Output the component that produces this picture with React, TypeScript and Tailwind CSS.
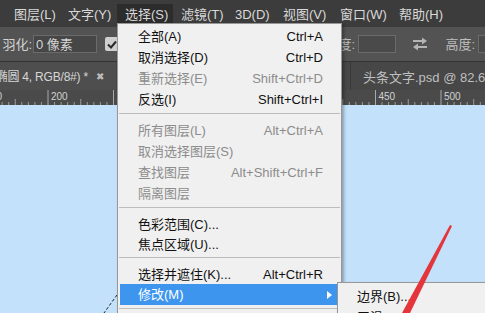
import React from 'react';

type Item = { label: string; key?: string; off?: boolean; h?: string; active?: boolean; sub?: boolean };

const font = "font-['Liberation_Sans','Noto_Sans_CJK_SC',sans-serif]";

const bar: { label: string; w: string }[] = [
  { label: '图层(L)', w: 'w-[54px]' },
  { label: '文字(Y)', w: 'w-[57px]' },
  { label: '选择(S)', w: 'w-[56px]' },
  { label: '滤镜(T)', w: 'w-[54px]' },
  { label: '3D(D)', w: 'w-[48px]' },
  { label: '视图(V)', w: 'w-[57px]' },
  { label: '窗口(W)', w: 'w-[59px]' },
  { label: '帮助(H)', w: 'w-[60px]' },
];

const groups: Item[][] = [
  [
    { label: '全部(A)', key: 'Ctrl+A' },
    { label: '取消选择(D)', key: 'Ctrl+D' },
    { label: '重新选择(E)', key: 'Shift+Ctrl+D', off: true },
    { label: '反选(I)', key: 'Shift+Ctrl+I' },
  ],
  [
    { label: '所有图层(L)', key: 'Alt+Ctrl+A', off: true },
    { label: '取消选择图层(S)', off: true },
    { label: '查找图层', key: 'Alt+Shift+Ctrl+F', off: true },
    { label: '隔离图层', off: true },
  ],
  [
    { label: '色彩范围(C)...', h: 'h-[20px]' },
    { label: '焦点区域(U)...', h: 'h-[20px]' },
  ],
  [
    { label: '选择并遮住(K)...', key: 'Alt+Ctrl+R', h: 'h-[20px]' },
    { label: '修改(M)', active: true, sub: true },
  ],
  [
    { label: '扩大选取(G)' },
    { label: '选取相似(R)' },
  ],
];

const Row = ({ it }: { it: Item }) => (
  <div
    className={`relative mx-[2px] flex items-center justify-between whitespace-nowrap pl-[18px] pr-[16px] text-[13px] leading-none ${it.h ?? 'h-[21px]'} ${
      it.active ? 'bg-[#3d95ee] text-white' : it.off ? 'text-[#8c8c8c]' : 'text-[#111]'
    }`}
  >
    <span>{it.label}</span>
    {it.key && <span>{it.key}</span>}
    {it.sub && (
      <svg className="absolute right-[7px] top-[7px]" width="5" height="8" viewBox="0 0 5 8">
        <polygon points="0,0 5,4 0,8" fill="#fff" />
      </svg>
    )}
  </div>
);

const Ruler = () => {
  const step = 65.5;
  const ticks: React.ReactNode[] = [];
  for (let k = -1; k <= 7; k++) {
    const x0 = 48 + k * step;
    ticks.push(<line key={`M${k}`} x1={x0} y1={0} x2={x0} y2={15} stroke="#a9a9a9" strokeWidth={1} />);
    ticks.push(
      <text key={`T${k}`} x={x0 + 3} y={10} fontSize={10} fill="#d2d2d2" fontFamily="Liberation Sans, sans-serif">
        {200 + k * 50}
      </text>
    );
    for (let m = 1; m < 10; m++) {
      const x = x0 + (m * step) / 10;
      const h = m === 5 ? 6 : 3;
      ticks.push(<line key={`m${k}-${m}`} x1={x} y1={15 - h} x2={x} y2={15} stroke="#9a9a9a" strokeWidth={1} />);
    }
  }
  return (
    <svg width="485" height="15" className="block">
      {ticks}
    </svg>
  );
};

export default function App() {
  return (
    <div className={`relative flex h-[313px] w-[485px] flex-col overflow-hidden bg-[#c3e1fb] ${font}`}>
      {/* menu bar */}
      <div className="flex h-[27px] shrink-0 items-start bg-[#3c3c3c] pl-[6px] pt-[4px] text-[13px] text-[#d9d9d9]">
        {bar.map((b) => (
          <div
            key={b.label}
            className={`flex h-[20px] shrink-0 items-center whitespace-nowrap pl-[8px] leading-none ${b.w} ${
              b.label === '选择(S)' ? 'bg-[#2c2c2c]' : ''
            }`}
          >
            {b.label}
          </div>
        ))}
      </div>

      {/* options bar */}
      <div className="flex h-[34px] shrink-0 items-center overflow-hidden whitespace-nowrap bg-[#535353] text-[13px] leading-none text-[#d4d4d4]">
        <div className="flex w-[33px] shrink-0 justify-end overflow-hidden pr-[1px]">羽化:</div>
        <div className="flex h-[18px] w-[64px] shrink-0 items-center border border-[#6a6a6a] bg-[#464646] pl-[2px]">
          0 像素
        </div>
        <div className="ml-[8px] flex h-[14px] w-[14px] shrink-0 items-center justify-center rounded-[2px] bg-[#cfcfcf]">
          <svg width="10" height="9" viewBox="0 0 10 9">
            <path d="M1 4.5 L4 7.5 L9 1.5" stroke="#2a2a2a" strokeWidth="2" fill="none" />
          </svg>
        </div>
        <div className="flex w-[237px] shrink-0 justify-end pr-[1px] text-[#bdbdbd]">宽度:</div>
        <div className="ml-[2px] h-[18px] w-[38px] shrink-0 border border-[#6a6a6a] bg-[#4a4a4a]" />
        <svg className="ml-[16px] shrink-0" width="16" height="14" viewBox="0 0 16 14">
          <path d="M1 4 H11" stroke="#b4b4b4" strokeWidth="2" />
          <polygon points="10,0.5 15,4 10,7.5" fill="#b4b4b4" />
          <path d="M5 10 H15" stroke="#b4b4b4" strokeWidth="2" />
          <polygon points="6,6.5 1,10 6,13.5" fill="#b4b4b4" />
        </svg>
        <div className="flex w-[48px] shrink-0 justify-end pr-[1px] text-[#bdbdbd]">高度:</div>
        <div className="ml-[2px] h-[18px] w-[38px] shrink-0 border border-[#6a6a6a] bg-[#4a4a4a]" />
      </div>

      {/* tab bar */}
      <div className="flex h-[29px] shrink-0 overflow-hidden whitespace-nowrap border-t border-[#333] bg-[#474747] text-[13px] leading-none">
        <div className="flex w-[116px] shrink-0 items-center justify-end overflow-hidden bg-[#4e4e4e] pr-[12px] pt-[2px] text-[#d6d6d6]">
          <span className="shrink-0 text-[12px] tracking-[-0.2px]">椭圆 4, RGB/8#) *</span>
          <span className="ml-[8px] shrink-0 text-[10px] text-[#bcbcbc]">✖</span>
        </div>
        <div className="ml-[234px] flex shrink-0 items-center border-l border-[#393939] pl-[12px] pt-[2px] text-[#bfbfbf]">
          头条文字.psd @ 82.6% (椭圆 4, RGB/8#)
        </div>
      </div>

      {/* ruler */}
      <div className="h-[15px] shrink-0 bg-[#4a4a4a]">
        <Ruler />
      </div>

      {/* canvas */}
      <div className="flex-1 bg-[#c3e1fb]" />

      {/* selection path on canvas */}
      <svg className="absolute left-0 top-0" width="485" height="313">
        <line x1="117" y1="295" x2="104" y2="313" stroke="#222" strokeWidth="1" strokeDasharray="3 2" />
      </svg>

      {/* dropdown menu */}
      <div className="absolute left-[117px] top-[23px] w-[225px] border border-[#979797] bg-[#f0f0f0] pt-[2px] shadow-[2px_2px_3px_rgba(0,0,0,0.3)]">
        {groups.map((g, gi) => (
          <div key={gi}>
            {gi > 0 && <div className="mx-[1px] mb-[6px] mt-[3px] h-px bg-[#bdbdbd]" />}
            {g.map((it) => (
              <Row key={it.label} it={it} />
            ))}
          </div>
        ))}
      </div>

      {/* submenu */}
      <div className="absolute left-[337px] top-[282px] w-[170px] border border-[#979797] bg-[#f0f0f0] pt-[3px] shadow-[2px_2px_3px_rgba(0,0,0,0.3)]">
        {['边界(B)...', '平滑(S)...', '扩展(E)...', '收缩(C)...'].map((s) => (
          <div key={s} className="mx-[2px] flex h-[21px] items-center whitespace-nowrap pl-[17px] text-[13px] leading-none text-[#111]">
            {s}
          </div>
        ))}
      </div>

      {/* red annotation arrow */}
      <svg className="absolute left-0 top-0" width="485" height="313">
        <polygon points="450,225 452,226 410,313 402,313" fill="#e4343c" />
      </svg>
    </div>
  );
}
